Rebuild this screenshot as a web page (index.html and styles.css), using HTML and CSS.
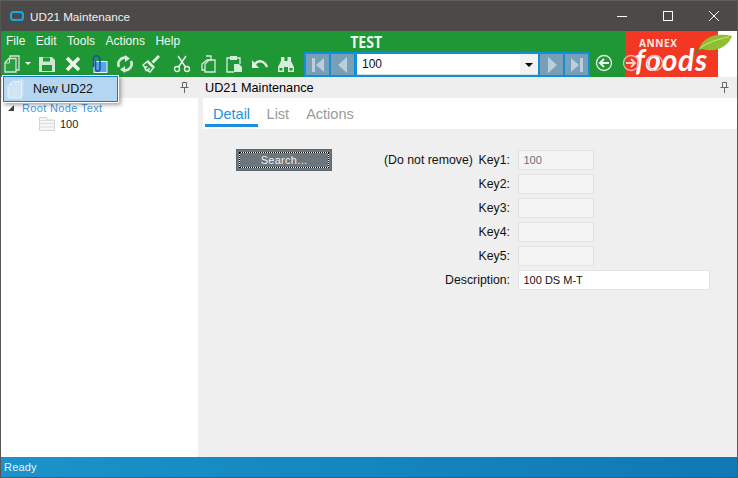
FILE: index.html
```html
<!DOCTYPE html>
<html lang="en">
<head>
<meta charset="utf-8">
<title>UD21 Maintenance</title>
<link rel="stylesheet" href="styles.css">
</head>
<body>
<div class="window">
  <header class="titlebar">
    <svg class="app-icon" width="14" height="10" viewBox="0 0 14 10"><rect x="1" y="1" width="12" height="8" rx="2.500" fill="none" stroke="#1aa7e8" stroke-width="2"/></svg>
    <span class="title">UD21 Maintenance</span>
    <div class="winctl">
      <svg width="46" height="30" viewBox="0 0 46 30"><path d="M18 15.500h10" stroke="#fff" fill="none"/></svg>
      <svg width="46" height="30" viewBox="0 0 46 30"><rect x="18.500" y="10.500" width="9" height="9" stroke="#fff" fill="none"/></svg>
      <svg width="46" height="30" viewBox="0 0 46 30"><path d="M18 10l10 10M28 10l-10 10" stroke="#fff" fill="none"/></svg>
    </div>
  </header>

  <section class="ribbon">
    <div class="ribbon-main">
      <div class="menu-row">
        <nav class="menu"><span>File</span><span>Edit</span><span>Tools</span><span>Actions</span><span>Help</span></nav>
        <div class="env">TEST</div>
      </div>
      <div class="tool-row">
        <div class="tools">
          <svg class="ico" viewBox="0 0 18 18"><path d="M7 3V1h9v14h-3" fill="none" stroke="#cfe6d4" stroke-width="1.300"/><path d="M6 3.500h7v13.500H2V7.500z" fill="#2b9c40" stroke="#cfe6d4" stroke-width="1.300"/><path d="M2 8h4.500V3.500" fill="none" stroke="#cfe6d4"/></svg>
          <span class="drop"></span>
          <svg class="ico" viewBox="0 0 18 18"><path d="M1 2h13l3 3v12H1z" fill="#cfe6d4"/><rect x="5" y="2.500" width="7" height="4" fill="#1f9735"/><rect x="4" y="10" width="10" height="6" fill="#1f9735"/></svg>
          <svg class="ico" viewBox="0 0 18 18"><path d="M3 3l12 12M15 3L3 15" stroke="#eef6ef" stroke-width="3.600" fill="none"/></svg>
          <svg class="ico" viewBox="0 0 18 18"><rect x="4" y="6.500" width="13" height="11" fill="#5aa4e8" stroke="#e8f3fb"/><path d="M3.500 12V4a3.200 3.200 0 0 1 6.400 0v10a2.200 2.200 0 0 1-4.400 0V5.500" fill="none" stroke="#1d52b0" stroke-width="1.600"/></svg>
          <svg class="ico" viewBox="0 0 18 18"><path d="M3 12A6.500 6.500 0 0 1 10 2.800M15 6a6.500 6.500 0 0 1-7 9.200" fill="none" stroke="#d8ecdb" stroke-width="2.600"/><path d="M9 0l5 3.500L9 7zM9 18l-5-3.500L9 11z" fill="#d8ecdb"/></svg>
          <svg class="ico" viewBox="0 0 18 18"><path d="M1 10l5-4 6 6-4 5-2-1 1-2-3 1.500-1-2 1.500-1.500-2 0zM10 7l6-6 1 1-6 6" fill="none" stroke="#eaf4eb" stroke-width="1.400"/><path d="M6 7l5 5" stroke="#eaf4eb" stroke-width="2.400"/></svg>
          <svg class="ico gap" viewBox="0 0 18 18"><circle cx="4" cy="14" r="2.500" fill="none" stroke="#e4f1e6" stroke-width="1.400"/><circle cx="14" cy="14" r="2.500" fill="none" stroke="#e4f1e6" stroke-width="1.400"/><path d="M5.500 12L13 1M12.500 12L5 1" stroke="#e4f1e6" stroke-width="1.500" fill="none"/></svg>
          <svg class="ico" viewBox="0 0 18 18"><path d="M7 1h5v4H8L3 9v6h3" fill="none" stroke="#d8ecdb" stroke-width="1.300"/><path d="M10 5h6v12H6V9z" fill="none" stroke="#d8ecdb" stroke-width="1.300"/></svg>
          <svg class="ico" viewBox="0 0 18 18"><path d="M5 3H2v14h7M12 3h3v6" fill="none" stroke="#d8ecdb" stroke-width="1.300"/><rect x="5" y="1" width="7" height="4" fill="#d8ecdb"/><path d="M9 9h5l3 3v5H9z" fill="#d8ecdb"/></svg>
          <svg class="ico" viewBox="0 0 18 18"><path d="M4 9c3-4 9-4 12 3" fill="none" stroke="#e4f1e6" stroke-width="2.400"/><path d="M1 5v8h7z" fill="#e4f1e6"/></svg>
          <svg class="ico" viewBox="0 0 18 18"><path d="M4 2h3.500v4h3V2H14v4l3 6v5h-6v-5H7v5H1v-5l3-6z" fill="#d8ecdb"/><path d="M2.500 13h3v2.500h-3zM12.500 13h3v2.500h-3z" fill="#1f9735"/></svg>
        </div>
        <div class="record-nav">
          <button class="navbtn" type="button"><svg width="16" height="14" viewBox="0 0 16 14"><path d="M2 0h3v14H2zM14 0v14L6 7z" fill="#b9cfdc"/></svg></button>
          <button class="navbtn" type="button"><svg width="16" height="16" viewBox="0 0 16 16"><path d="M12 0v16L3 8z" fill="#b9cfdc"/></svg></button>
          <div class="combo"><span class="combo-text">100</span><span class="combo-arrow"></span></div>
          <button class="navbtn" type="button"><svg width="16" height="16" viewBox="0 0 16 16"><path d="M4 0v16l9-8z" fill="#b9cfdc"/></svg></button>
          <button class="navbtn" type="button"><svg width="16" height="14" viewBox="0 0 16 14"><path d="M2 0v14l8-7zM11 0h3v14h-3z" fill="#b9cfdc"/></svg></button>
        </div>
        <svg class="circ" viewBox="0 0 18 18"><circle cx="9" cy="9" r="7.500" fill="none" stroke="#dff0e2" stroke-width="1.300"/><path d="M14 9H6M9 5L5 9l4 4" fill="none" stroke="#eef8f0" stroke-width="2"/></svg>
      </div>
    </div>
    <div class="logo">
      <span class="annex">ANNEX</span>
      <span class="foods">foods</span>
      <svg class="leaf" width="39" height="22" viewBox="0 0 39 22"><path d="M5 17C7 6 20 -1 38 3 34 14 22 20 8 16z" fill="#8fbf30"/><path d="M5 16C12 10 24 6 35 4" stroke="#cde58f" fill="none"/><path d="M1 21L5 15" stroke="#4c8a20" stroke-width="1.500" fill="none"/></svg>
      <svg class="circ-over one" viewBox="0 0 18 18"><circle cx="9" cy="9" r="7.500" fill="none" stroke="#f4b7ae" stroke-width="1.300"/><path d="M4 9h8M9 5l4 4-4 4" fill="none" stroke="#f8cfc9" stroke-width="2"/></svg>
      <svg class="circ-over two" viewBox="0 0 18 18"><circle cx="9" cy="9" r="7.500" fill="none" stroke="#f4b7ae" stroke-width="1.300"/></svg>
    </div>
  </section>

  <main class="workspace">
    <aside class="tree-panel">
      <div class="panel-head"><svg class="pin" width="9" height="11" viewBox="0 0 9 11"><path d="M2.500.5h4v5h-4zM.5 5.500h8M4.500 6v5" fill="none" stroke="#666"/></svg></div>
      <div class="tree">
        <div class="node-root"><span class="twist"></span><span class="root-text">Root Node Text</span></div>
        <div class="node-child">
          <svg width="16" height="14" viewBox="0 0 16 14"><path d="M.5 3V.5h7l1 2.500h7v10.500H.5z" fill="#f6f6f6" stroke="#d4d4d4"/><path d="M1 3.500h14M1 6.500h14M1 10h14" stroke="#dcdcdc"/></svg>
          <span>100</span>
        </div>
      </div>
    </aside>
    <section class="detail-panel">
      <div class="panel-head right"><span>UD21 Maintenance</span><svg class="pin" width="9" height="11" viewBox="0 0 9 11"><path d="M2.500.5h4v5h-4zM.5 5.500h8M4.500 6v5" fill="none" stroke="#666"/></svg></div>
      <div class="tabs">
        <span class="tab active">Detail</span><span class="tab">List</span><span class="tab">Actions</span>
      </div>
      <div class="form-area">
        <button class="search" type="button"><span>Search...</span></button>
        <div class="form-grid">
          <span class="note">(Do not remove)</span><span class="lbl">Key1:</span><span class="inp ro grey">100</span>
          <span class="lbl wide">Key2:</span><span class="inp ro"></span>
          <span class="lbl wide">Key3:</span><span class="inp ro"></span>
          <span class="lbl wide">Key4:</span><span class="inp ro"></span>
          <span class="lbl wide">Key5:</span><span class="inp ro"></span>
          <span class="lbl wide">Description:</span><span class="inp desc">100 DS M-T</span>
        </div>
      </div>
    </section>
  </main>

  <footer class="status">Ready</footer>

  <div class="popup">
    <div class="popup-item">
      <svg width="17" height="20" viewBox="0 0 17 20"><path d="M11 1h5v15h-2" fill="none" stroke="#d7e6f2"/><path d="M5.500 2.500h9v16.500H1V7z" fill="#d3e4f1" stroke="#eaf2f8"/><path d="M1 7h4.500V2.500" fill="#eaf2f8" stroke="#c5d7e6"/></svg>
      <span>New UD22</span>
    </div>
  </div>
</div>
</body>
</html>
```
FILE: styles.css
```css
* { box-sizing: border-box; }
html, body { margin: 0; padding: 0; }
body { font-family: "Liberation Sans", Arial, sans-serif; font-size: 12px; color: #111; }
.window { position: relative; width: 738px; height: 478px; border: 1px solid #565654; border-top-color: #5f5f5d; display: flex; flex-direction: column; overflow: hidden; background: #efefef; }

.titlebar { height: 30px; flex: none; background: #4c4a48; display: flex; align-items: center; color: #f1f1f1; padding-left: 9px; }
.title { margin-left: 6px; font-size: 11.700px; }
.winctl { margin-left: auto; display: flex; }
.winctl svg { display: block; }

.ribbon { height: 46px; flex: none; background: #1f9735; display: flex; }
.ribbon-main { width: 624px; flex: none; display: flex; flex-direction: column; }
.menu-row { height: 19px; display: flex; align-items: center; }
.menu { display: flex; color: #f4f9f4; font-size: 12px; padding-left: 5px; gap: 10.500px; }
.env { margin-left: 168px; font: bold 16px "Open Sans", sans-serif; color: #eaf6ec; transform: scaleX(.88); line-height: 19px; padding-top: 4px; }
.tool-row { height: 27px; display: flex; align-items: flex-start; padding-left: 2px; }
.tools { display: flex; align-items: center; gap: 8px; height: 27px; width: 301px; flex: none; }
.ico { width: 18px; height: 18px; flex: none; }
.ico.gap { margin-left: 5px; }
.drop { width: 0; height: 0; border: 3px solid transparent; border-top: 3px solid #fff; border-bottom: 0; margin: 0 -1px 0 -4px; }

.record-nav { width: 286px; height: 25px; margin-top: 2px; flex: none; background: #0f8fd5; display: flex; gap: 2px; padding: 2px; }
.navbtn { width: 23px; padding: 0; border: 0; background: #789fb8; display: flex; align-items: center; justify-content: center; flex: none; }
.combo { flex: 1; margin-left: 1px; background: #fff; display: flex; align-items: center; border-bottom: 1px solid #ddd; }
.combo-text { padding-left: 5px; font-size: 12px; color: #111; }
.combo-arrow { margin-left: auto; width: 18px; height: 100%; background: #f2f2f2; position: relative; }
.combo-arrow::after { content: ""; position: absolute; left: 5px; top: 9px; border: 4px solid transparent; border-top: 4px solid #000; border-bottom: 0; }
.circ { width: 18px; height: 18px; margin: 4px 0 0 5px; flex: none; }

.logo { position: relative; flex: none; width: 113px; background: linear-gradient(90deg, #f23723 0 93px, #fff 93px); }
.annex { position: absolute; left: 14px; top: 5px; color: #fbe9e5; font: bold 10px/14px "Open Sans", sans-serif; letter-spacing: .6px; }
.foods { position: absolute; left: 10px; top: 10px; color: #fff; font: italic bold 30px/36px "Lato", sans-serif; letter-spacing: .7px; }
.leaf { position: absolute; left: 69px; top: 2px; }
.circ-over { position: absolute; width: 18px; height: 18px; top: 23px; }
.circ-over.one { left: -3px; }
.circ-over.two { left: 21px; }

.workspace { flex: 1; min-height: 0; display: flex; gap: 5px; }
.tree-panel { width: 197px; flex: none; background: #fff; display: flex; flex-direction: column; }
.panel-head { height: 21px; flex: none; background: #eee; display: flex; align-items: center; justify-content: flex-end; padding-right: 9px; }
.panel-head.right { justify-content: space-between; padding-left: 2px; padding-right: 8px; color: #000; font-size: 12.700px; }
.pin { display: block; }
.tree { padding: 3px 0 0 7px; }
.node-root { display: flex; align-items: center; height: 14px; }
.twist { width: 0; height: 0; border-style: solid; border-width: 0 0 6px 6px; border-color: transparent transparent #444 transparent; margin-right: 8px; }
.root-text { color: #3f97e9; font-size: 11px; letter-spacing: .35px; }
.node-child { display: flex; align-items: center; gap: 5px; padding: 1px 0 0 31px; height: 17px; font-size: 11px; color: #222; }

.detail-panel { flex: 1; display: flex; flex-direction: column; min-width: 0; }
.tabs { height: 31px; flex: none; background: #fff; display: flex; padding-left: 2px; font-size: 14.500px; color: #9a9a9a; }
.tab { padding-top: 8px; margin-right: 17px; line-height: 17px; height: 29px; }
.tab:last-child { margin-right: 0; }
.tab.active { color: #1e8fe0; border-bottom: 3px solid #1e8fe0; padding: 8px 7.500px 0 8px; margin-right: 9px; }

.form-area { flex: 1; display: flex; align-items: flex-start; padding: 20px 0 0 33px; background: #efefef; }
.search { width: 96px; height: 22px; flex: none; padding: 2px; border: 1px solid #5a666c; background: #6b777d; color: #eef1f3; font: 11px "Liberation Sans", sans-serif; letter-spacing: .3px; }
.search span { display: block; height: 100%; line-height: 14px; border: 1px dotted #000; background: linear-gradient(#6b777d, #6b777d) padding-box, #fff border-box; }
.form-grid { display: grid; grid-template-columns: 89px 37px auto; grid-auto-rows: 20px; row-gap: 4px; margin: 1px 0 0 52px; align-items: center; font-size: 12.300px; }
.note { white-space: nowrap; color: #111; }
.lbl { text-align: right; width: 45px; margin-left: -8px; justify-self: end; white-space: nowrap; color: #111; }
.lbl.wide { grid-column: 1 / 3; width: auto; }
.inp { margin-left: 8px; height: 20px; line-height: 18px; border: 1px solid #e3e3e3; padding-left: 4.500px; font-size: 11px; }
.inp.ro { width: 76px; background: #f4f4f4; }
.inp.grey { color: #6a6f7a; }
.inp.desc { width: 192px; background: #fff; color: #111; }

.status { height: 20px; flex: none; background: linear-gradient(90deg, #1b93c9, #0f78b5); color: #e8f4fa; font-size: 11px; line-height: 20px; padding-left: 3px; letter-spacing: .2px; }

.popup { position: absolute; left: 1px; top: 74px; width: 117px; height: 28px; background: #fff; padding: 1px; box-shadow: 2px 2px 4px rgba(0,0,0,.35); }
.popup-item { height: 26px; background: #b5d6f0; border: 1px solid #0f78d0; display: flex; align-items: center; padding-left: 3px; font-size: 12.400px; color: #111; }
.popup-item span { margin-left: 9px; }
```
